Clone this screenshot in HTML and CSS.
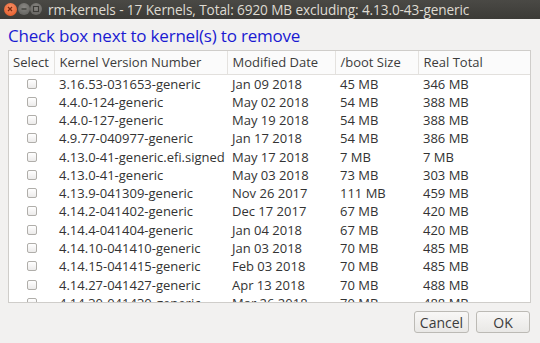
FILE: index.html
```html
<!DOCTYPE html>
<html lang="en">
<head>
    <meta charset="UTF-8">
    <meta name="viewport" content="width=device-width, initial-scale=1.0">
    <title>rm-kernels</title>
    <link rel="stylesheet" href="styles.css">
</head>
<body>
    <div class="window">
        <div class="titlebar">
            <div class="controls">
                <span class="ctl close">
                    <svg width="12" height="12" viewBox="0 0 12 12"><path d="M4 4 L8 8 M8 4 L4 8" stroke="#7a2a10" stroke-width="1.3"/></svg>
                </span>
                <span class="ctl">
                    <svg width="12" height="12" viewBox="0 0 12 12"><path d="M3.5 6 H8.5" stroke="#3c3b37" stroke-width="1.3"/></svg>
                </span>
                <span class="ctl">
                    <svg width="12" height="12" viewBox="0 0 12 12"><rect x="3.5" y="3.5" width="5" height="5" fill="none" stroke="#3c3b37" stroke-width="1.1"/></svg>
                </span>
            </div>
            <div class="title">rm-kernels - 17 Kernels, Total: 6920 MB excluding: 4.13.0-43-generic</div>
        </div>

        <div class="content">
            <h1 class="prompt">Check box next to kernel(s) to remove</h1>

            <div class="list">
                <table>
                    <thead>
                        <tr>
                            <th class="col-select">Select</th>
                            <th class="col-kernel">Kernel Version Number</th>
                            <th class="col-date">Modified Date</th>
                            <th class="col-boot">/boot Size</th>
                            <th class="col-total">Real Total</th>
                        </tr>
                    </thead>
                    <tbody>
                        <tr><td><span class="check"></span></td><td>3.16.53-031653-generic</td><td>Jan 09 2018</td><td>45 MB</td><td>346 MB</td></tr>
                        <tr><td><span class="check"></span></td><td>4.4.0-124-generic</td><td>May 02 2018</td><td>54 MB</td><td>388 MB</td></tr>
                        <tr><td><span class="check"></span></td><td>4.4.0-127-generic</td><td>May 19 2018</td><td>54 MB</td><td>388 MB</td></tr>
                        <tr><td><span class="check"></span></td><td>4.9.77-040977-generic</td><td>Jan 17 2018</td><td>54 MB</td><td>386 MB</td></tr>
                        <tr><td><span class="check"></span></td><td>4.13.0-41-generic.efi.signed</td><td>May 17 2018</td><td>7 MB</td><td>7 MB</td></tr>
                        <tr><td><span class="check"></span></td><td>4.13.0-41-generic</td><td>May 03 2018</td><td>73 MB</td><td>303 MB</td></tr>
                        <tr><td><span class="check"></span></td><td>4.13.9-041309-generic</td><td>Nov 26 2017</td><td>111 MB</td><td>459 MB</td></tr>
                        <tr><td><span class="check"></span></td><td>4.14.2-041402-generic</td><td>Dec 17 2017</td><td>67 MB</td><td>420 MB</td></tr>
                        <tr><td><span class="check"></span></td><td>4.14.4-041404-generic</td><td>Jan 04 2018</td><td>67 MB</td><td>420 MB</td></tr>
                        <tr><td><span class="check"></span></td><td>4.14.10-041410-generic</td><td>Jan 03 2018</td><td>70 MB</td><td>485 MB</td></tr>
                        <tr><td><span class="check"></span></td><td>4.14.15-041415-generic</td><td>Feb 03 2018</td><td>70 MB</td><td>485 MB</td></tr>
                        <tr><td><span class="check"></span></td><td>4.14.27-041427-generic</td><td>Apr 13 2018</td><td>70 MB</td><td>488 MB</td></tr>
                        <tr><td><span class="check"></span></td><td>4.14.30-041430-generic</td><td>Mar 26 2018</td><td>70 MB</td><td>488 MB</td></tr>
                        <tr><td><span class="check"></span></td><td>4.15.0-20-generic</td><td>Apr 24 2018</td><td>76 MB</td><td>512 MB</td></tr>
                    </tbody>
                </table>
            </div>

            <div class="actions">
                <button class="btn btn-cancel">Cancel</button>
                <button class="btn btn-ok">OK</button>
            </div>
        </div>
    </div>
</body>
</html>
```

FILE: styles.css
```css
html, body {
    margin: 0;
    padding: 0;
}
body {
    background-color: #f2f1f0;
    font-family: "Open Sans", "Noto Sans", sans-serif;
    color: #3c3c3c;
    width: 540px;
    height: 343px;
    overflow: hidden;
}
.titlebar {
    height: 19px;
    display: flex;
    align-items: center;
    background: linear-gradient(#4a4945, #3c3b37);
    color: #dfdbd2;
}
.controls {
    display: flex;
    gap: 0;
    margin-left: 4px;
    width: 44px;
}
.ctl {
    width: 12px;
    height: 12px;
    border-radius: 50%;
    background: radial-gradient(circle at 50% 35%, #8a8884, #5d5c58);
    display: flex;
}
.ctl.close {
    width: 13px;
    height: 13px;
    margin-right: 1px;
    background: radial-gradient(circle at 50% 35%, #f7926a, #e2521d);
}
.title {
    font-size: 13.6px;
    letter-spacing: -0.1px;
    white-space: nowrap;
}
.content {
    padding: 0 9px 0 8px;
}
.prompt {
    margin: 6px 0 3px 0;
    font-size: 17px;
    font-weight: normal;
    color: #1a1ad2;
    line-height: 22px;
    letter-spacing: -0.2px;
}
.list {
    height: 251px;
    background: #ffffff;
    border: 1px solid #cfcdca;
    overflow: hidden;
}
table {
    border-collapse: collapse;
    table-layout: fixed;
    width: 100%;
    font-size: 13px;
}
th, td {
    box-sizing: border-box;
}
th {
    height: 23px;
    padding: 0 0 0 5px;
    text-align: left;
    font-weight: normal;
    color: #3c3c3c;
    background: #fbfbfb;
    border-bottom: 1px solid #e2e0dd;
    border-left: 1px solid #e4e2df;
    white-space: nowrap;
}
th.col-select {
    border-left: none;
    padding-left: 4px;
}
.col-select { width: 45px; }
.col-kernel { width: 173px; }
.col-date { width: 108px; }
.col-boot { width: 83px; }
td {
    height: 18.3px;
    padding: 0 0 0 5px;
    line-height: 18px;
    white-space: nowrap;
    overflow: hidden;
    color: #333333;
}
td:first-child {
    padding-left: 18px;
}
.check {
    display: block;
    width: 8px;
    height: 8px;
    border: 1px solid #b0aeaa;
    border-radius: 2px;
    background: linear-gradient(#ffffff, #ecebea);
}
.actions {
    display: flex;
    justify-content: flex-end;
    gap: 7px;
    margin-top: 8px;
    padding-right: 1px;
}
.btn {
    height: 22px;
    font-family: "Open Sans", "Noto Sans", sans-serif;
    font-size: 14px;
    color: #3c3c3c;
    background: linear-gradient(#f8f7f6, #e9e8e6);
    border: 1px solid #bcbab5;
    border-radius: 3px;
    padding: 0;
}
.btn-cancel { width: 55px; }
.btn-ok { width: 54px; }
```
